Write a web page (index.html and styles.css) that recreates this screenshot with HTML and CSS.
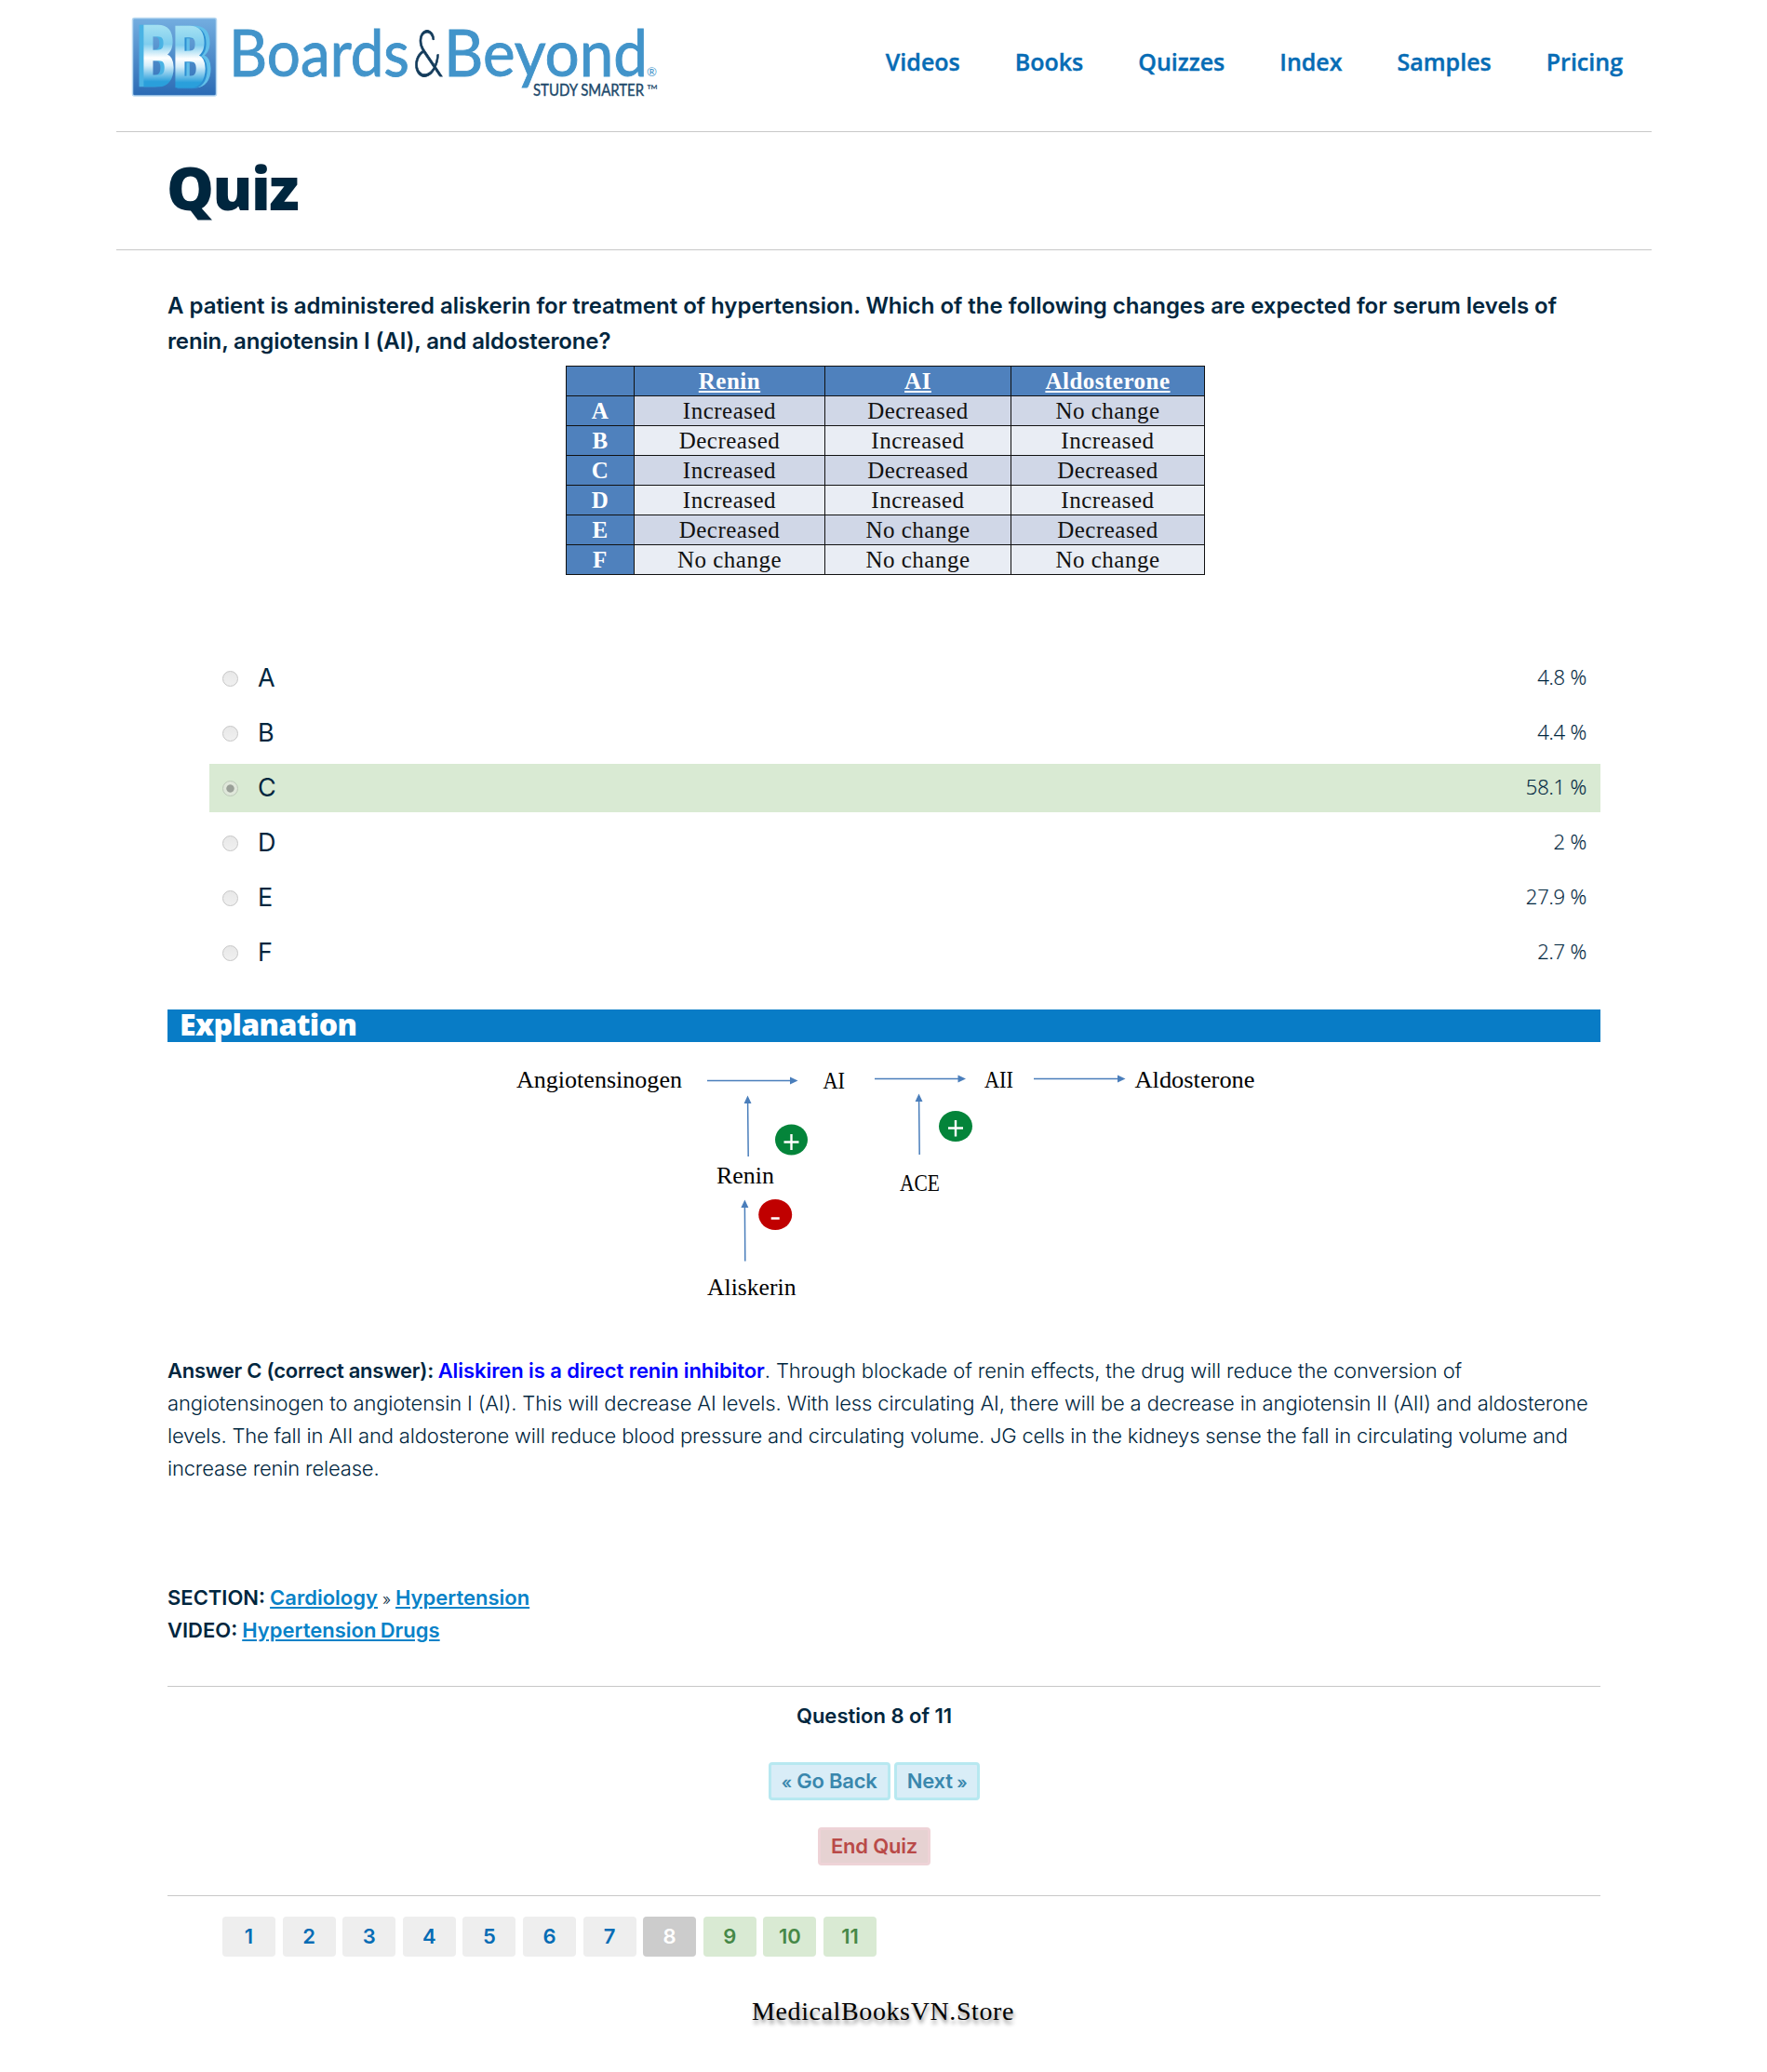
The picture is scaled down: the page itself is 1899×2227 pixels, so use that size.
FILE: index.html
```html
<!DOCTYPE html>
<html lang="en">
<head>
<meta charset="utf-8">
<title>Quiz</title>
<link rel="stylesheet" href="styles.css">
</head>
<body>
<div class="page">
  <header class="header">
    <svg class="logo" width="580" height="110" viewBox="0 0 580 110" role="img" aria-label="Boards &amp; Beyond">
      <defs>
        <linearGradient id="tile" x1="0" y1="0" x2="0" y2="1"><stop offset="0" stop-color="#74aee0"/><stop offset="1" stop-color="#2a6ab4"/></linearGradient>
        <linearGradient id="face" x1="0" y1="0" x2="0" y2="1"><stop offset=".2" stop-color="#a6e2f2"/><stop offset=".4" stop-color="#7fcdee"/><stop offset=".54" stop-color="#ffffff"/><stop offset=".62" stop-color="#d5eefa"/><stop offset=".78" stop-color="#2a9fdb"/></linearGradient>
      </defs>
      <rect x="2.500" y="19.500" width="90" height="83.500" rx="2" fill="url(#tile)" stroke="#b5d6f0" stroke-width="1.500"/>
      <g class="logo-mark">
        <text x="6" y="92" textLength="38" lengthAdjust="spacingAndGlyphs" fill="#4ab3e4" stroke="#4ab3e4">B</text>
        <text x="50" y="93" textLength="38" lengthAdjust="spacingAndGlyphs" fill="#62bfe9" stroke="#62bfe9">B</text>
        <text x="47" y="94" textLength="37" lengthAdjust="spacingAndGlyphs" fill="#2c8fd2" stroke="#2c8fd2">B</text>
        <text x="11" y="92" textLength="37" lengthAdjust="spacingAndGlyphs" fill="url(#face)" stroke="url(#face)">B</text>
        <text x="45" y="93" textLength="37" lengthAdjust="spacingAndGlyphs" fill="url(#face)" stroke="url(#face)">B</text>
      </g>
      <g class="logo-name">
        <text x="106" y="81.500" textLength="194" lengthAdjust="spacingAndGlyphs">Boards</text>
        <text class="logo-amp" x="304" y="81.500" textLength="32" lengthAdjust="spacingAndGlyphs">&amp;</text>
        <text x="337" y="81.500" textLength="219" lengthAdjust="spacingAndGlyphs">Beyond</text>
      </g>
      <text class="logo-reg" x="555" y="82" textLength="11" lengthAdjust="spacingAndGlyphs">®</text>
      <text class="logo-tag" x="433" y="103" textLength="119" lengthAdjust="spacingAndGlyphs">STUDY SMARTER</text>
      <text class="logo-tm" x="555" y="103" textLength="12" lengthAdjust="spacingAndGlyphs">™</text>
    </svg>
    <nav class="nav">
      <a>Videos</a><a>Books</a><a>Quizzes</a><a>Index</a><a>Samples</a><a>Pricing</a>
    </nav>
  </header>
  <div class="title-bar"><h1>Quiz</h1></div>
  <main class="content">
    <p class="question">A patient is administered aliskerin for treatment of hypertension. Which of the following changes are expected for serum levels of<br><span class="q2">renin, angiotensin I (AI), and aldosterone?</span></p>
    <table class="options">
      <colgroup><col class="c-key"><col class="c-renin"><col class="c-ai"><col class="c-ald"></colgroup>
      <tr><th></th><th><u>Renin</u></th><th><u>AI</u></th><th><u>Aldosterone</u></th></tr>
      <tr><th>A</th><td>Increased</td><td>Decreased</td><td>No change</td></tr>
      <tr><th>B</th><td>Decreased</td><td>Increased</td><td>Increased</td></tr>
      <tr><th>C</th><td>Increased</td><td>Decreased</td><td>Decreased</td></tr>
      <tr><th>D</th><td>Increased</td><td>Increased</td><td>Increased</td></tr>
      <tr><th>E</th><td>Decreased</td><td>No change</td><td>Decreased</td></tr>
      <tr><th>F</th><td>No change</td><td>No change</td><td>No change</td></tr>
    </table>
    <ul class="answers">
      <li><i class="radio"></i><span class="letter">A</span><span class="pct">4.8 %</span></li>
      <li><i class="radio"></i><span class="letter">B</span><span class="pct">4.4 %</span></li>
      <li class="correct"><i class="radio checked"></i><span class="letter">C</span><span class="pct">58.1 %</span></li>
      <li><i class="radio"></i><span class="letter">D</span><span class="pct">2 %</span></li>
      <li><i class="radio"></i><span class="letter">E</span><span class="pct">27.9 %</span></li>
      <li><i class="radio"></i><span class="letter">F</span><span class="pct">2.7 %</span></li>
    </ul>
    <h2 class="explanation">Explanation</h2>
    <svg class="pathway" width="1540" height="336" viewBox="180 1120 1540 336">
      <g class="labels">
        <text x="555" y="1168.500" textLength="178" lengthAdjust="spacingAndGlyphs">Angiotensinogen</text>
        <text x="884.500" y="1170" textLength="23.500" lengthAdjust="spacingAndGlyphs">AI</text>
        <text x="1058" y="1168.500" textLength="31" lengthAdjust="spacingAndGlyphs">AII</text>
        <text x="1219.500" y="1168.500" textLength="129" lengthAdjust="spacingAndGlyphs">Aldosterone</text>
        <text x="770" y="1272" textLength="62" lengthAdjust="spacingAndGlyphs">Renin</text>
        <text x="967" y="1280" textLength="43" lengthAdjust="spacingAndGlyphs">ACE</text>
        <text x="760" y="1391.500" textLength="95.500" lengthAdjust="spacingAndGlyphs">Aliskerin</text>
      </g>
      <g class="arrows">
        <path d="M760 1161.500H850M940 1159.500H1031M1111 1159.500H1202M804.200 1243L803.600 1185M988.200 1241L987.600 1183M800.800 1355.500L800.400 1297"/>
        <path class="heads" d="M849 1157.500L857.500 1161.500L849 1165.500ZM1029.500 1155.500L1038 1159.500L1029.500 1163.500ZM1201 1155.500L1209.500 1159.500L1201 1163.500ZM799.600 1186L803.500 1177.500L807.500 1186ZM983.600 1184L987.500 1175.500L991.500 1184ZM796.400 1298L800.400 1289.500L804.400 1298Z"/>
      </g>
      <ellipse cx="850.500" cy="1225" rx="17.500" ry="16.500" fill="#04843a"/>
      <ellipse cx="1027" cy="1210.500" rx="18" ry="16.500" fill="#04843a"/>
      <ellipse cx="833.200" cy="1305.500" rx="18" ry="16.500" fill="#c00000"/>
      <path class="signs" d="M842.500 1227.500H858.500M850.500 1219V1236M1019 1212.500H1035M1027 1204V1221.500M828.700 1309.500H837.700"/>
    </svg>
    <div class="text">
      <p><b class="lead">Answer C (correct answer):</b> <b class="key">Aliskiren is a direct renin inhibitor</b><span class="l1">. Through blockade of renin effects, the drug will reduce the conversion of</span><br>
      <span class="l2">angiotensinogen to angiotensin I (AI). This will decrease AI levels. With less circulating AI, there will be a decrease in angiotensin II (AII) and aldosterone</span><br>
      <span class="l3">levels. The fall in AII and aldosterone will reduce blood pressure and circulating volume. JG cells in the kidneys sense the fall in circulating volume and</span><br>
      <span class="l3">increase renin release.</span></p>
      <p class="meta"><b>SECTION:</b> <a>Cardiology</a> <span class="sep">»</span> <a>Hypertension</a><br><b>VIDEO:</b> <a>Hypertension Drugs</a></p>
    </div>
    <section class="controls">
      <p class="progress">Question 8 of 11</p>
      <div class="buttons"><a class="btn"><small>«</small> Go Back</a><a class="btn">Next<small> »</small></a></div>
      <a class="btn end">End Quiz</a>
    </section>
    <nav class="pager"><a>1</a><a>2</a><a>3</a><a>4</a><a>5</a><a>6</a><a>7</a><a class="current">8</a><a class="done">9</a><a class="done">10</a><a class="done">11</a></nav>
  </main>
  <footer class="store">MedicalBooksVN.Store</footer>
</div>
</body>
</html>
```
FILE: styles.css
```css
* { box-sizing: border-box; }
body { margin: 0; background: #fff; color: #00263e; font-family: Inter, "Liberation Sans", sans-serif; }
h1, h2, p, ul { margin: 0; padding: 0; }
.page { width: 1650px; margin-left: 125px; }

.header { display: flex; justify-content: space-between; height: 142px; padding: 0 31px 0 15px; border-bottom: 1px solid #c8c8c8; }
.logo { display: block; flex: none; }
.logo-mark { font: 900 88px Lato, sans-serif; stroke-width: 2.500; }
.logo-name { font: 400 69px Lato, sans-serif; fill: #4294ca; stroke: #4294ca; stroke-width: .9; }
.logo-name .logo-amp { font-weight: 300; fill: #123a5a; stroke: #123a5a; }
.logo-tag { font: 400 16.500px Lato, sans-serif; fill: #20486a; stroke: #20486a; stroke-width: .4; }
.logo-reg { font: 400 14px Lato, sans-serif; fill: #4294ca; }
.logo-tm { font: 400 16px Lato, sans-serif; fill: #20486a; }
.nav { display: flex; gap: 59px; padding-top: 51px; font: 600 25px/30px "Open Sans", sans-serif; color: #066cb5; -webkit-text-stroke: .4px #066cb5; }
.title-bar { height: 127px; padding: 28px 0 0 54px; border-bottom: 1px solid #c8c8c8; }
h1 { font: 800 64px/64px "Open Sans", sans-serif; letter-spacing: -1.5px; }

.content { padding: 41px 55px 0; }
.question { font-size: 24px; line-height: 38px; font-weight: 600; white-space: nowrap; letter-spacing: -.023px; }
.q2 { letter-spacing: -.138px; }
.options { width: 686px; margin: 7px 0 0 428px; border-collapse: collapse; table-layout: fixed; font: 25px/25px "Liberation Serif", serif; letter-spacing: .5px; color: #111; text-align: center; }
.c-key { width: 73px; } .c-renin { width: 205px; } .c-ai { width: 200px; } .c-ald { width: 208px; }
.options tr { height: 32px; background: #e9edf4; }
.options tr:nth-child(even) { background: #d0d7e7; }
.options th, .options td { padding: 0; border: 1px solid #111; }
.options th { background: #4f81bd; color: #fff; font-weight: 700; }

.answers { list-style: none; display: flex; flex-direction: column; gap: 7px; margin: 85px 0 0 45px; }
.answers li { display: flex; align-items: center; height: 52px; padding: 0 15px 0 14px; }
.answers .correct { background: #d9ead3; }
.radio { width: 17px; height: 17px; border: 1px solid #c6c6c6; border-radius: 50%; background: linear-gradient(#e8e8e8, #f0f0f0); }
.radio.checked { background: radial-gradient(circle, #9aa098 0 3.800px, #dfe7da 4.600px); border-color: #bcc8b8; }
.letter { margin-left: 21px; padding-bottom: 1px; font-size: 27px; font-weight: 400; }
.pct { margin-left: auto; padding-bottom: 4px; font: 300 22px/26px "Open Sans", sans-serif; letter-spacing: -.2px; -webkit-text-stroke: .2px #00263e; }

.explanation { height: 35px; margin-top: 35px; padding-left: 13px; background: #087cc6; color: #fff; font: 800 32px/31px "Open Sans", sans-serif; letter-spacing: -.6px; }
.pathway { display: block; }
.labels { font: 25px "Liberation Serif", serif; fill: #000; }
.arrows { fill: none; stroke: #4a7ebb; stroke-width: 1.500; }
.arrows .heads { fill: #4a7ebb; stroke: none; }
.signs { fill: none; stroke: #fff; stroke-width: 2.400; }

.text { font-size: 22px; line-height: 35px; font-weight: 300; white-space: nowrap; }
.text b { font-weight: 600; }
.text .lead { letter-spacing: -.254px; }
.text .key { margin-left: -1.500px; color: #00f; letter-spacing: -.07px; }
.l1, .l2 { letter-spacing: -.123px; }
.l3 { letter-spacing: -.18px; }
.meta { margin-top: 104px; word-spacing: -1.200px; }
.meta a { color: #0782c8; font-weight: 600; text-decoration: underline; }
.sep { font-size: 17px; line-height: 0; }

.controls { display: flex; flex-direction: column; align-items: center; height: 226px; margin-top: 42px; padding: 16px 21px 0 0; border-top: 1px solid #c8c8c8; border-bottom: 1px solid #c8c8c8; }
.progress { font-size: 22px; line-height: 30px; font-weight: 600; }
.buttons { display: flex; gap: 4px; margin: 35px 0 29px; }
.btn { height: 41px; padding: 0 11px; border: 3px solid #b7e8f0; border-radius: 4px; background: #d9edf7; color: #3a87ad; font-size: 22px; line-height: 35px; font-weight: 600; letter-spacing: -.2px; white-space: pre; }
.btn small { font-size: 18px; }
.end { border-color: #eed3d7; background: #e6d2d2; color: #b94a48; }
.pager { display: flex; gap: 7.600px; margin: 22px 0 0 59px; }
.pager a { width: 57px; height: 43px; border-radius: 4px; background: #eee; color: #066cb5; font-size: 22px; line-height: 42px; font-weight: 600; text-align: center; }
.pager .current { background: #ccc; color: #fff; }
.pager .done { background: #d9ead3; color: #468847; }
.store { margin: 41px 0 0 683px; font: 28px/36px "Liberation Serif", serif; letter-spacing: .61px; color: #000; text-shadow: 1px 4px 4px rgba(0, 0, 0, .45); }
```
